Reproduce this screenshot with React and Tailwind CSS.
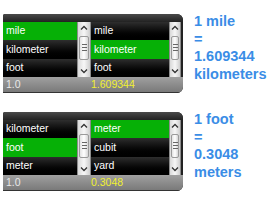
import React from 'react';

const font = { fontFamily: '"Liberation Sans", Arial, sans-serif' };

function Chevron({ up }) {
  return (
    <svg width="8" height="5" viewBox="0 0 8 5" className="block">
      <path d={up ? 'M1 4.5 L4 1.5 L7 4.5' : 'M1 0.5 L4 3.5 L7 0.5'} fill="none" stroke="#333" strokeWidth="1.3" />
    </svg>
  );
}

function ScrollBar({ w }) {
  return (
    <div className={`${w} h-full flex flex-col items-center justify-between py-[3px] bg-gradient-to-r from-[#d9d9d9] via-[#f7f7f7] to-[#cfcfcf] border-x border-[#8c8c8c]`}>
      <Chevron up />
      <div className="w-[80%] h-[24px] -mt-[4px] rounded-[2px] border border-[#9a9a9a] bg-gradient-to-r from-[#e2e2e2] via-white to-[#d5d5d5] flex flex-col items-center justify-center gap-[2px]">
        <div className="w-[5px] h-px bg-[#666]" />
        <div className="w-[5px] h-px bg-[#666]" />
        <div className="w-[5px] h-px bg-[#666]" />
      </div>
      <Chevron />
    </div>
  );
}

function Column({ items, selected, w }) {
  return (
    <div className={`${w} h-full flex flex-col`}>
      {items.map((it, i) => (
        <div
          key={it}
          className={`flex-1 flex items-center pl-[3px] text-[10.5px] text-white ${
            i === selected ? 'bg-[#06b006]' : 'bg-gradient-to-b from-[#2e2e2e] to-black'
          }`}
        >
          {it}
        </div>
      ))}
    </div>
  );
}

function Converter({ left, leftSel, right, rightSel, value, result }) {
  return (
    <div className="w-[180px] h-[79px] flex flex-col rounded-r-[6px] rounded-tl-[2px] overflow-hidden bg-[#1c1c1c]" style={font}>
      <div className="h-[8px] bg-gradient-to-b from-[#4a4a4a] to-[#222]" />
      <div className="h-[55px] flex">
        <Column items={left} selected={leftSel} w="w-[74px]" />
        <ScrollBar w="w-[14px]" />
        <Column items={right} selected={rightSel} w="w-[78px]" />
        <ScrollBar w="w-[12px]" />
        <div className="w-[2px] bg-[#222]" />
      </div>
      <div className="h-[15px] flex items-center bg-gradient-to-b from-[#a0a0a0] to-[#7a7a7a] text-[10.5px]">
        <div className="w-[88px] pl-[3px] text-[#e8e8e8]">{value}</div>
        <div className="text-[#f0f030]">{result}</div>
      </div>
      <div className="h-[1px] bg-[#333]" />
    </div>
  );
}

function Caption({ lines }) {
  return (
    <div className="ml-[11px] -mt-[1px] text-[14.5px] leading-[17.5px] font-bold text-[#3a8de6]" style={font}>
      {lines.map((l) => (
        <div key={l}>{l}</div>
      ))}
    </div>
  );
}

export default function App() {
  return (
    <div className="w-[280px] h-[210px] bg-white pt-[14px] pl-[3px] flex flex-col gap-[19px] overflow-hidden">
      <div className="flex items-start">
        <Converter
          left={['mile', 'kilometer', 'foot']}
          leftSel={0}
          right={['mile', 'kilometer', 'foot']}
          rightSel={1}
          value="1.0"
          result="1.609344"
        />
        <Caption lines={['1 mile', '=', '1.609344', 'kilometers']} />
      </div>
      <div className="flex items-start">
        <Converter
          left={['kilometer', 'foot', 'meter']}
          leftSel={1}
          right={['meter', 'cubit', 'yard']}
          rightSel={0}
          value="1.0"
          result="0.3048"
        />
        <Caption lines={['1 foot', '=', '0.3048', 'meters']} />
      </div>
    </div>
  );
}
